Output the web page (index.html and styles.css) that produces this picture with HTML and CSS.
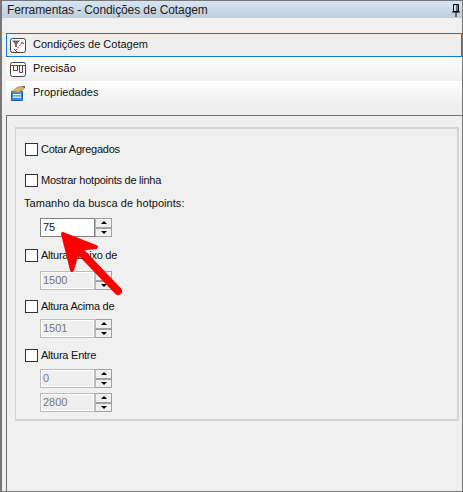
FILE: index.html
```html
<!DOCTYPE html>
<html lang="pt">
<head>
<meta charset="utf-8">
<title>Ferramentas - Condições de Cotagem</title>
<link rel="stylesheet" href="styles.css">
</head>
<body>
<div class="window">
  <header class="titlebar">
    <span>Ferramentas - Condições de Cotagem</span>
    <svg class="pin" width="8" height="13" viewBox="0 0 8 13"><path d="M1.500 .5h5v7h-5zM5 1v6M0 8h8M4 8v5" fill="none" stroke="#000"/></svg>
  </header>
  <div class="body">
    <nav class="tabs">
      <div class="tab tab-active">
        <svg class="tab-icon" width="16" height="16" viewBox="0 0 16 16"><rect x=".5" y=".5" width="15" height="14" rx="2" fill="#fff" stroke="#444"/><path d="M2 2.500h8L7 6v3H5V6z" fill="#666"/><path d="M5.500 12.500L12.500 4.500" stroke="#d11" stroke-dasharray="2 1" fill="none"/><path d="M4 11l3 3M11 4l3 2" stroke="#d11" fill="none"/></svg>
        <span>Condições de Cotagem</span>
      </div>
      <div class="tab">
        <svg class="tab-icon" width="16" height="16" viewBox="0 0 16 16"><rect x=".5" y=".5" width="15" height="14" rx="2" fill="#fff" stroke="#444"/><path d="M1 3.500h14" stroke="#c22"/><path d="M3.500 3.500v5h4v-5M9.500 3.500v7h3v-7" fill="none" stroke="#444"/></svg>
        <span>Precisão</span>
      </div>
      <div class="tab">
        <svg class="tab-icon" width="16" height="16" viewBox="0 0 16 16"><path d="M1.500 5.500h11v9h-11z" fill="#2d8fe8" stroke="#1a62b0"/><path d="M3 8h8v1.200H3zM3 10.500h8v1.200H3z" fill="#fff"/><path d="M2 5.500l5-4 6-2 1 3-5 4z" fill="#e0b060" stroke="#a07830" stroke-width=".6"/><path d="M12 0l3-.5v3z" fill="#5a4aa0"/></svg>
        <span>Propriedades</span>
      </div>
    </nav>
    <main class="panel">
      <section class="group">
        <label class="check check-first"><span class="box"></span><span class="check-text">Cotar Agregados</span></label>
        <label class="check check-second"><span class="box"></span><span class="check-text">Mostrar hotpoints de linha</span></label>
        <div class="field-label">Tamanho da busca de hotpoints:</div>
        <div class="spinner spinner-active"><span class="input">75</span><span class="spin"><i class="up"></i><i class="down"></i></span></div>
        <label class="check check-third"><span class="box"></span><span class="check-text">Altura Abaixo de</span></label>
        <div class="spinner spinner-off spinner-a"><span class="input">1500</span><span class="spin"><i class="up"></i><i class="down"></i></span></div>
        <label class="check check-fourth"><span class="box"></span><span class="check-text">Altura Acima de</span></label>
        <div class="spinner spinner-off spinner-b"><span class="input">1501</span><span class="spin"><i class="up"></i><i class="down"></i></span></div>
        <label class="check check-fifth"><span class="box"></span><span class="check-text">Altura Entre</span></label>
        <div class="spinner spinner-off spinner-c"><span class="input">0</span><span class="spin"><i class="up"></i><i class="down"></i></span></div>
        <div class="spinner spinner-off spinner-last"><span class="input">2800</span><span class="spin"><i class="up"></i><i class="down"></i></span></div>
      </section>
    </main>
  </div>
  <svg class="arrow" width="463" height="492" viewBox="0 0 463 492">
    <path d="M118 291L74 245" stroke="#f00" stroke-width="8" stroke-linecap="round" fill="none"/>
    <path d="M63 234L96 247L78 249L72 270Z" fill="#f00" stroke="#f00" stroke-width="4" stroke-linejoin="round"/>
  </svg>
</div>
</body>
</html>
```
FILE: styles.css
```css
* { box-sizing: border-box; }
html, body { margin: 0; padding: 0; }
body { width: 463px; height: 492px; overflow: hidden; background: #f0f0f0; font: 11px/14px "Liberation Sans", Arial, sans-serif; color: #111; }
.window { position: relative; width: 463px; height: 492px; border: 1px solid #777; border-left-width: 2px; display: flex; flex-direction: column; background: #f0f0f0; }
.titlebar { height: 17px; flex: none; display: flex; align-items: center; justify-content: space-between; padding: 0 2px 0 5px; background: linear-gradient(#d7e4f1, #bfcedb); font-size: 12px; letter-spacing: -0.1px; color: #222; }
.pin { margin-top: 2px; }
.body { flex: 1; display: flex; flex-direction: column; padding: 15px 0 0 4px; min-height: 0; }
.tabs { flex: none; display: flex; flex-direction: column; }
.tab { height: 24px; display: flex; align-items: center; gap: 7px; padding-left: 4px; background: linear-gradient(#fff, #eee); }
.tab span { position: relative; top: -1px; }
.tab-active { background: #efefef; border: 1px solid #0a7cd6; padding-left: 3px; }
.tab-icon { flex: none; margin-top: 2px; }
.panel { flex: 1; margin-top: 10px; border-top: 1px solid #707070; border-left: 1px solid #707070; padding: 11px 3px 0 8px; min-height: 0; }
.group { height: 294px; border: 1px solid #d4d4d4; border-width: 2px 2px 2px 1px; padding: 0 0 0 9px; }
.check { display: flex; align-items: center; gap: 3px; height: 13px; }
.check-text { letter-spacing: -0.25px; position: relative; top: -1px; }
.box { width: 13px; height: 13px; flex: none; border: 1px solid #333; background: #fff; }
.check-first { margin-top: 14px; }
.check-second { margin-top: 18px; }
.check-third { margin-top: 12px; }
.check-fourth { margin-top: 10px; }
.check-fifth { margin-top: 11px; }
.field-label { margin-top: 9px; margin-left: -1px; height: 14px; letter-spacing: 0.05px; }
.spinner { display: flex; width: 72px; height: 19px; margin-left: 15px; }
.spinner-active { margin-top: 8px; }
.spinner-a { margin-top: 9px; }
.spinner-b { margin-top: 6px; }
.spinner-c { margin-top: 7px; }
.spinner-last { margin-top: 5px; }
.input { width: 55px; height: 100%; border: 1px solid #808080; background: #fff; padding: 1px 0 0 2px; }
.spin { width: 17px; height: 100%; display: flex; flex-direction: column; }
.spin i { flex: 1; display: flex; align-items: center; justify-content: center; background: #f0f0f0; border: 1px solid #a0a0a0; border-left-color: #bbb; }
.spin i::after { content: ""; border-left: 3px solid transparent; border-right: 3px solid transparent; }
.spin .up::after { border-bottom: 3px solid #000; }
.spin .down::after { border-top: 3px solid #000; }
.spinner-off .input { border-color: #bcbcbc; background: #efefef; box-shadow: inset 0 0 0 1px #fff; color: #777; }
.arrow { position: absolute; left: -2px; top: -1px; pointer-events: none; }
```
